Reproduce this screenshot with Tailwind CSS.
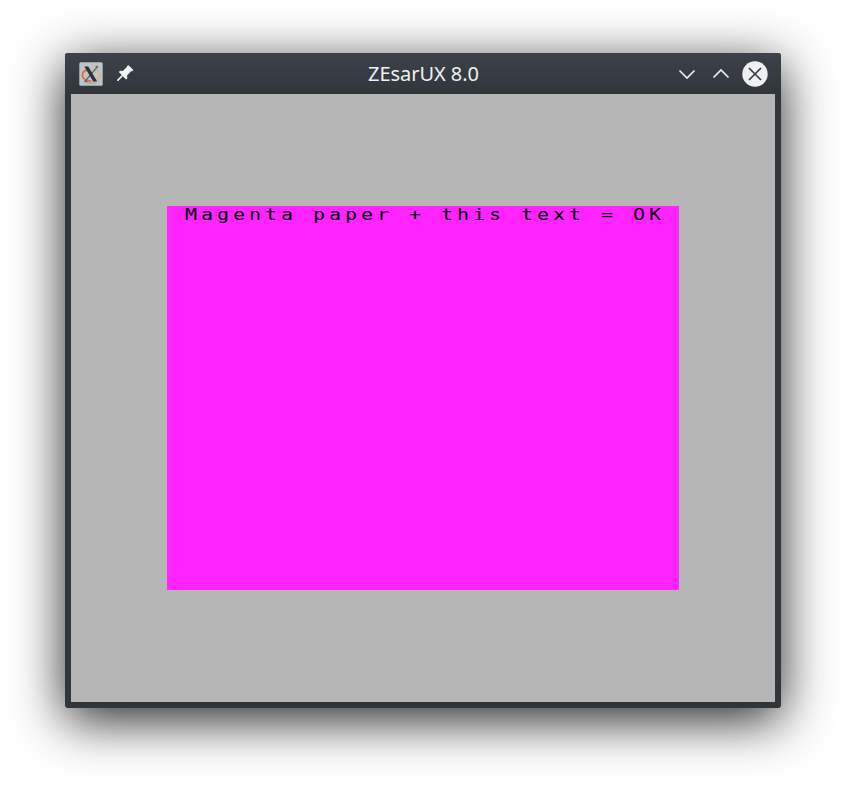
<!DOCTYPE html>
<html lang="en">
<head>
<meta charset="utf-8">
<title>ZEsarUX 8.0</title>
<script src="https://cdn.jsdelivr.net/npm/@tailwindcss/browser@4"></script>
</head>
<body class="h-[785px] w-[846px] overflow-hidden bg-white pt-[53px] pl-[65px]">
<main class="flex h-[655px] w-[716px] flex-col rounded-[3px] bg-[#31363b] shadow-[0_12px_52px_rgba(0,0,0,0.86)]">
  <header class="grid h-[41px] shrink-0 grid-cols-[1fr_auto_1fr] items-center rounded-t-[3px] bg-linear-to-b from-[#3d424b] to-[#31363b] pr-[13px] pl-3.5">
    <div class="flex items-center gap-3">
      <svg class="size-6" viewBox="0 0 24 24" fill="none">
        <rect x=".3" y=".3" width="23.4" height="23.4" rx="1.5" fill="#bdc5c8"/>
        <ellipse cx="12" cy="21" rx="6" ry="1.2" fill="#aab2b5"/>
        <path d="M21.3 13c0-3-3.5-5.2-8.5-5.4M21.3 13c0 3.2-3.8 6-9.3 6.2" stroke="#efad6b" stroke-width="1.2"/>
        <path d="M9 7.7C5.5 8.5 3.4 10.5 3.4 13c0 3.2 3.5 5.7 8.6 6.2" stroke="#ed6335" stroke-width="1.7"/>
        <path d="M5.8 19.5 18.8 4.3" stroke="#59636b" stroke-width="1.3"/>
        <path d="M5.3 4.5h4l8.9 15h-4z" fill="#2d3236"/>
        <path d="M5 19.6h3.5M16.5 4.4H19" stroke="#59636b"/>
      </svg>
      <svg class="size-5" viewBox="0 0 20 20" fill="#f1f3f4">
        <path d="m13.5 1.2 4.9 4.9-1.3 1.4-.8-.5-4.3 4.4.4 2.9-1.3 1.2-3.2-3.2-4.7 4.6H2.1v-1.1l4.7-4.7-3-3.1L5 6.8l2.8.3 4.3-4.4-.2-.6z"/>
      </svg>
    </div>
    <h1 class="font-['Noto_Sans',sans-serif] text-[20px] leading-[27px] font-normal tracking-[-0.05px] whitespace-nowrap text-[#eff0f1]">ZEsarUX 8.0</h1>
    <div class="flex items-center justify-end gap-2">
      <svg class="size-[26px]" viewBox="0 0 26 26" fill="none" stroke="#eff0f1" stroke-width="1.6"><path d="m5.5 9.5 7.5 7.5 7.5-7.5"/></svg>
      <svg class="size-[26px]" viewBox="0 0 26 26" fill="none" stroke="#eff0f1" stroke-width="1.6"><path d="m5.5 16.5 7.5-7.5 7.5 7.5"/></svg>
      <svg class="size-[26px]" viewBox="0 0 26 26" fill="none"><circle cx="13" cy="13" r="12.7" fill="#eff0f1"/><path d="m7 7 12 12M19 7 7 19" stroke="#31363b" stroke-width="1.6"/></svg>
    </div>
  </header>
  <section class="mx-1.5 mb-1.5 flex-1 bg-[#b6b6b6] px-24 py-28">
    <div class="h-96 w-lg bg-[#ff24ff] pl-[17.5px]">
      <p class="w-[390px] origin-left scale-x-125 font-['DejaVu_Sans_Mono',monospace] text-[16px] leading-[18px] tracking-[3.168px] whitespace-nowrap text-black">Magenta paper + this text = OK</p>
    </div>
  </section>
</main>
</body>
</html>
